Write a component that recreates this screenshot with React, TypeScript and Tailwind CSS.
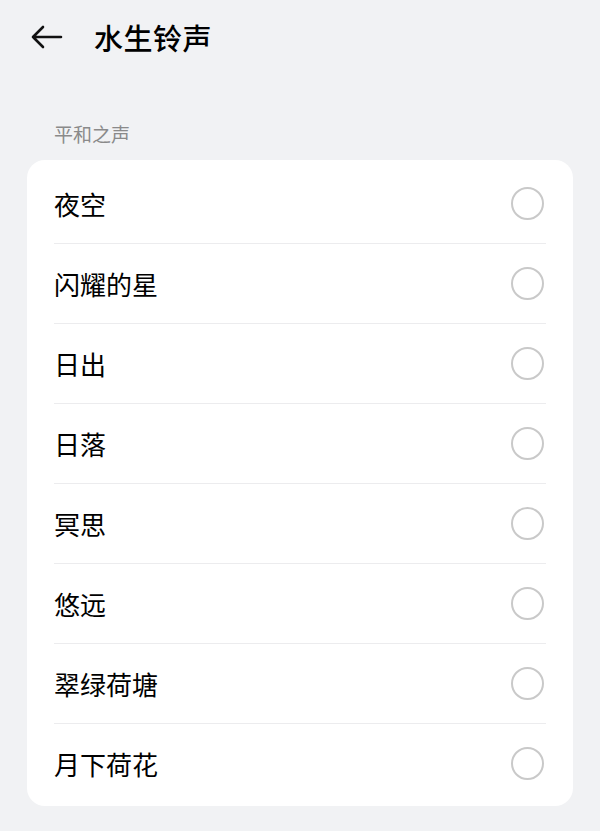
const items = ["夜空", "闪耀的星", "日出", "日落", "冥思", "悠远", "翠绿荷塘", "月下荷花"];

export default function App() {
  return (
    <div
      className="min-h-[831px] w-[600px] bg-[#f1f2f4] text-black"
      style={{ fontFamily: '"Noto Sans CJK SC", "Noto Sans", sans-serif' }}
    >
      <header className="flex h-[74px] items-center pl-[31px]">
        <svg width="32" height="24" viewBox="0 0 32 24" fill="none" stroke="#111" strokeWidth="2.6" strokeLinecap="round" strokeLinejoin="round">
          <path d="M2 12h28M12 2 2 12l10 10" />
        </svg>
        <h1 className="ml-[31px] text-[29px] font-medium leading-none tracking-[0.5px]">水生铃声</h1>
      </header>

      <div className="px-[54px] pt-[50px] pb-[17px] text-[19px] leading-none text-[#8a8a8a]">平和之声</div>

      <div className="mx-[27px] rounded-[18px] bg-white pt-[4px] pb-[3px]">
        {items.map((name, i) => (
          <div key={name} className="px-[27px]">
            {i > 0 && <div className="h-px bg-[#ececee]" />}
            <div className="flex h-[79px] items-center justify-between">
              <span className="text-[26px] leading-none">{name}</span>
              <span className="mr-[2px] h-[33px] w-[33px] rounded-full border-2 border-[#c9c9c9]" />
            </div>
          </div>
        ))}
      </div>
    </div>
  );
}
